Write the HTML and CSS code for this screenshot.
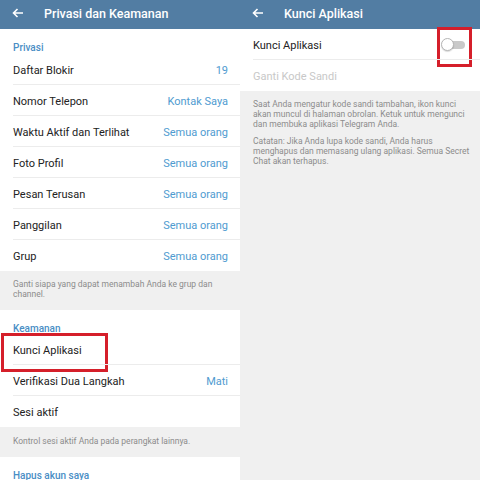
FILE: index.html
```html
<!DOCTYPE html>
<html lang="id">
<head>
    <meta charset="UTF-8">
    <title>Privasi dan Keamanan</title>
    <link rel="stylesheet" href="styles.css">
</head>
<body>
    <div class="screen">
        <div class="topbar">
            <svg class="back" width="12" height="10" viewBox="0 0 12 10"><path d="M11 5H1.5M5.5 1L1.5 5l4 4" fill="none" stroke="#fff" stroke-width="1.6"/></svg>
            <span class="title">Privasi dan Keamanan</span>
        </div>

        <div class="section">
            <div class="section-head">Privasi</div>
            <div class="row"><span>Daftar Blokir</span><span class="value">19</span></div>
            <div class="row"><span>Nomor Telepon</span><span class="value">Kontak Saya</span></div>
            <div class="row"><span>Waktu Aktif dan Terlihat</span><span class="value">Semua orang</span></div>
            <div class="row"><span>Foto Profil</span><span class="value">Semua orang</span></div>
            <div class="row"><span>Pesan Terusan</span><span class="value">Semua orang</span></div>
            <div class="row"><span>Panggilan</span><span class="value">Semua orang</span></div>
            <div class="row last"><span>Grup</span><span class="value">Semua orang</span></div>
        </div>
        <div class="note">Ganti siapa yang dapat menambah Anda ke grup dan channel.</div>

        <div class="section">
            <div class="section-head second">Keamanan</div>
            <div class="row"><span>Kunci Aplikasi</span><div class="mark mark-row"></div></div>
            <div class="row"><span>Verifikasi Dua Langkah</span><span class="value">Mati</span></div>
            <div class="row last"><span>Sesi aktif</span></div>
        </div>
        <div class="note short">Kontrol sesi aktif Anda pada perangkat lainnya.</div>

        <div class="section fill">
            <div class="section-head second">Hapus akun saya</div>
        </div>
    </div>

    <div class="screen">
        <div class="topbar">
            <svg class="back" width="12" height="10" viewBox="0 0 12 10"><path d="M11 5H1.5M5.5 1L1.5 5l4 4" fill="none" stroke="#fff" stroke-width="1.6"/></svg>
            <span class="title">Kunci Aplikasi</span>
        </div>

        <div class="section">
            <div class="row">
                <span>Kunci Aplikasi</span>
                <div class="switch"><div class="knob"></div></div>
                <div class="mark mark-switch"></div>
            </div>
            <div class="row last disabled"><span>Ganti Kode Sandi</span></div>
        </div>
        <div class="note info">
            <p>Saat Anda mengatur kode sandi tambahan, ikon kunci akan muncul di halaman obrolan. Ketuk untuk mengunci dan membuka aplikasi Telegram Anda.</p>
            <p>Catatan: Jika Anda lupa kode sandi, Anda harus menghapus dan memasang ulang aplikasi. Semua Secret Chat akan terhapus.</p>
        </div>
    </div>
</body>
</html>
```

FILE: styles.css
```css
* { box-sizing: border-box; }
body {
    margin: 0;
    display: flex;
    font-family: Roboto, "Noto Sans", sans-serif;
    color: #222;
    background: #f0f0f0;
}
.screen {
    width: 240px;
    height: 480px;
    overflow: hidden;
    display: flex;
    flex-direction: column;
    background: #f0f0f0;
}
.topbar {
    height: 29px;
    flex-shrink: 0;
    display: flex;
    align-items: center;
    padding: 0 0 3px 12px;
    background: #527da3;
    color: #fff;
}
.back { margin-right: 20px; }
.title {
    font-size: 12.5px;
    font-weight: 500;
}
.section { background: #fff; }
.section.fill { flex: 1; }
.section-head {
    padding: 12px 13px 0;
    height: 25px;
    line-height: 13px;
    font-size: 10px;
    font-weight: 500;
    color: #4a8ec5;
}
.section-head.second { padding-top: 12px; height: 24px; }
.row {
    position: relative;
    height: 31px;
    display: flex;
    align-items: center;
    justify-content: space-between;
    padding: 1px 12px 0 13px;
    font-size: 11px;
}
.row::after {
    content: "";
    position: absolute;
    left: 13px;
    right: 0;
    bottom: 0;
    height: 1px;
    background: #ececec;
}
.row.last::after { display: none; }
.value { color: #4f9bd0; }
.disabled { color: #c8c8c8; }
.note {
    padding: 8px 13px 11px;
    font-size: 8.5px;
    line-height: 10px;
    color: #8c8c8c;
}
.note.short { padding: 9px 13px 11px; }
.note.info { padding: 8px 6px 0 13px; }
.note p { margin: 0 0 7px; }

.switch {
    position: relative;
    width: 20px;
    height: 8px;
    margin-right: 3px;
    border-radius: 4px;
    background: #c9c9c9;
}
.knob {
    position: absolute;
    left: -4px;
    top: -3px;
    width: 13px;
    height: 13px;
    border-radius: 50%;
    background: #fff;
    border: 1px solid #b5b5b5;
    box-shadow: 0 1px 1px rgba(0,0,0,0.15);
}
.mark {
    position: absolute;
    border: 3px solid #d51f2a;
}
.mark-row {
    left: 1px;
    top: -1px;
    width: 107px;
    height: 39px;
}
.mark-switch {
    left: 197px;
    top: -2px;
    width: 35px;
    height: 40px;
}
```
